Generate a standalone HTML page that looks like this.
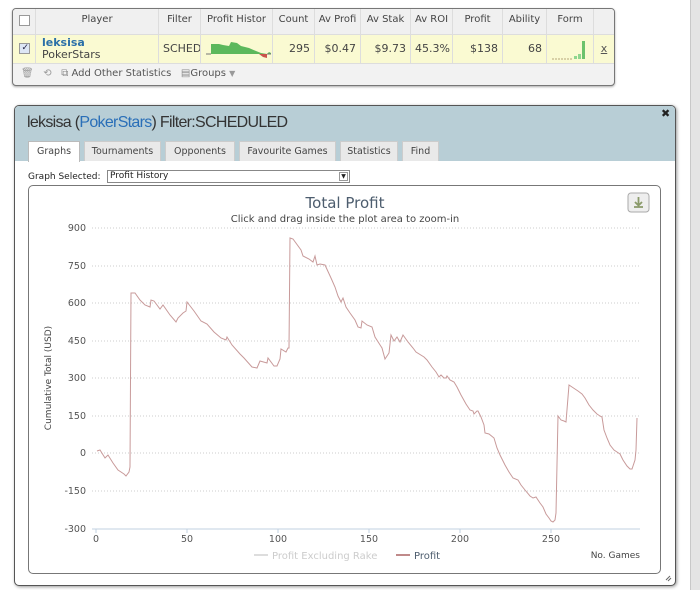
<!DOCTYPE html>
<html><head><meta charset="utf-8"><style>
*{box-sizing:border-box;margin:0;padding:0}
body{width:700px;height:590px;background:#fff;font-family:"DejaVu Sans","Liberation Sans",sans-serif;position:relative;overflow:hidden;color:#333}
.abs{position:absolute}
.scroll{left:690px;top:0;width:10px;height:590px;background:#e4e4e4;border-left:1px solid #c8c8c8}
.tbl{left:12px;top:8px;width:603px;height:78px;border:1px solid #777;border-radius:4px;background:#f2f2f2;box-shadow:0 1px 2px #aaa;overflow:hidden}
.hdr{left:0;top:0;width:601px;height:26px;background:#f0f0f0;border-bottom:1px solid #ddd}
.row{left:0;top:26px;width:601px;height:29px;background:#fafad2;border-bottom:1px solid #ddd}
.c{position:absolute;top:0;height:100%;border-right:1px solid #ddd;font-size:10px;color:#444;white-space:nowrap;overflow:hidden}
.hdr .c{text-align:center;line-height:22px}
.row .c{line-height:28px;text-align:right;padding-right:4px;font-size:11px}
.cb{position:absolute;width:11px;height:11px;border:1px solid #999;background:#fff;left:6px}
.dlg{left:14px;top:105px;width:662px;height:481px;border:1px solid #555;border-radius:5px;background:#fff;box-shadow:1px 1px 3px #999;overflow:hidden}
.dh{left:0;top:0;width:660px;height:55px;background:#b8ced6}
.tab{position:absolute;top:35px;height:20px;background:#e9e9e9;border:1px solid #ccc;border-bottom:none;font-size:9.5px;line-height:19px;text-align:center;color:#444}
.chart{left:13px;top:79px;width:633px;height:389px;border:1px solid #777;border-radius:5px;background:#fff}
</style></head><body>
<div class="abs scroll"></div>

<div class="abs tbl">
 <div class="abs hdr">
  <div class="c" style="left:0;width:23px"><div class="cb" style="top:6px"></div></div>
  <div class="c" style="left:23px;width:123px">Player</div>
  <div class="c" style="left:146px;width:42px">Filter</div>
  <div class="c" style="left:188px;width:72px">Profit Histor</div>
  <div class="c" style="left:260px;width:42px">Count</div>
  <div class="c" style="left:302px;width:46px">Av Profi</div>
  <div class="c" style="left:348px;width:50px">Av Stak</div>
  <div class="c" style="left:398px;width:42px">Av ROI</div>
  <div class="c" style="left:440px;width:50px">Profit</div>
  <div class="c" style="left:490px;width:44px">Ability</div>
  <div class="c" style="left:534px;width:47px">Form</div>
  <div class="c" style="left:581px;width:20px;border:none"></div>
 </div>
 <div class="abs row">
  <div class="c" style="left:0;width:23px"><div class="cb" style="top:8px;background:#dde6f5;font-size:9px;line-height:9px;color:#224">✓</div></div>
  <div class="c" style="left:23px;width:123px;text-align:left;padding-left:6px;line-height:12px;padding-top:2px"><b style="color:#2a6fa8">leksisa</b><br>PokerStars</div>
  <div class="c" style="left:146px;width:42px;text-align:left;padding-left:4px">SCHEDU</div>
  <div class="c" style="left:188px;width:72px">
   <svg width="72" height="28" style="position:absolute;left:0;top:0"><path d="M10,9 L18,9 L22,10 L28,11 L30,7 L36,8 L40,11 L48,13 L55,16 L60,18 L66,19 L68,17 L70,18 L70,19 L10,19Z" fill="#5cb85c"/><path d="M58,19 L66,19 L66,23 L62,22Z" fill="#c9534b"/><path d="M5,19 L10,19 M66,19 L70,19" stroke="#777" stroke-width="1"/></svg>
  </div>
  <div class="c" style="left:260px;width:42px">295</div>
  <div class="c" style="left:302px;width:46px">$0.47</div>
  <div class="c" style="left:348px;width:50px">$9.73</div>
  <div class="c" style="left:398px;width:42px;text-align:left;padding-left:4px">45.3%</div>
  <div class="c" style="left:440px;width:50px">$138</div>
  <div class="c" style="left:490px;width:44px">68</div>
  <div class="c" style="left:534px;width:47px"><svg width="47" height="28" style="position:absolute;left:0;top:0"><path d="M5,24 H26" stroke="#b5a57a" stroke-dasharray="2,1"/><rect x="27" y="21" width="3" height="3" fill="#8fd68f"/><rect x="31" y="19" width="3" height="5" fill="#8fd68f"/><rect x="35" y="6" width="3" height="18" fill="#6cc26c"/></svg></div>
  <div class="c" style="left:581px;width:20px;border:none;text-align:center;padding:0;text-decoration:underline;color:#555">x</div>
 </div>
 <div class="abs" style="left:8px;top:59px;font-size:10px;color:#555;white-space:nowrap">
  <span style="color:#999">🗑</span>&nbsp;&nbsp;&nbsp;<span style="color:#999">⟲</span>&nbsp;&nbsp;&nbsp;<span style="color:#888">⧉</span> Add Other Statistics &nbsp;&nbsp;<span style="color:#888">▤</span>Groups <span style="color:#999;font-size:8px">▼</span>
 </div>
</div>

<div class="abs dlg">
 <div class="abs dh"></div>
 <div class="abs" style="left:12px;top:8px;font-family:'Liberation Sans',sans-serif;font-size:16px;color:#333;letter-spacing:-0.7px">leksisa (<span style="color:#2a6fb8">PokerStars</span>) Filter:SCHEDULED</div>
 <div class="abs" style="left:646px;top:1px;font-size:11px;font-weight:bold;color:#222">✖</div>
 <div class="tab" style="left:13px;width:52px;background:#fff;border-color:#bbb;height:21px">Graphs</div>
 <div class="tab" style="left:69px;width:77px">Tournaments</div>
 <div class="tab" style="left:150px;width:70px">Opponents</div>
 <div class="tab" style="left:224px;width:97px">Favourite Games</div>
 <div class="tab" style="left:325px;width:58px">Statistics</div>
 <div class="tab" style="left:387px;width:37px">Find</div>
 <div class="abs" style="left:13px;top:66px;font-size:9px;color:#222">Graph Selected:</div>
 <div class="abs" style="left:92px;top:64px;width:243px;height:13px;border:1px solid #888;font-size:9px;line-height:11px;padding-left:2px;color:#222">Profit History<span style="position:absolute;right:1px;top:1px;width:9px;height:9px;border:1px solid #999;font-size:6px;line-height:8px;text-align:center">▼</span></div>
 <div class="abs chart"></div>
</div>

<svg class="abs" style="left:0;top:0" width="690" height="590">
 <g stroke="#ccc" stroke-dasharray="1,2" stroke-width="1">
  <path d="M92,228H640M92,266H640M92,303H640M92,341H640M92,378H640M92,416H640M92,453H640M92,491H640"/>
 </g>
 <path d="M92,529H640" stroke="#c0d0e0"/>
 <g stroke="#c0d0e0"><path d="M96,529v4M187,529v4M278,529v4M369,529v4M460,529v4M551,529v4"/></g>
 <g font-family="DejaVu Sans,sans-serif" font-size="9.5" fill="#555" text-anchor="end">
  <text x="86" y="231">900</text><text x="86" y="269">750</text><text x="86" y="306">600</text><text x="86" y="344">450</text><text x="86" y="381">300</text><text x="86" y="419">150</text><text x="86" y="456">0</text><text x="86" y="494">-150</text><text x="86" y="532">-300</text>
 </g>
 <g font-family="DejaVu Sans,sans-serif" font-size="9.5" fill="#555" text-anchor="middle">
  <text x="96" y="542">0</text><text x="187" y="542">50</text><text x="278" y="542">100</text><text x="369" y="542">150</text><text x="460" y="542">200</text><text x="551" y="542">250</text>
 </g>
 <text x="51" y="378" transform="rotate(-90 51 378)" font-family="DejaVu Sans,sans-serif" font-size="9" fill="#444" text-anchor="middle">Cumulative Total (USD)</text>
 <text x="345" y="208" font-family="DejaVu Sans,sans-serif" font-size="15" fill="#4d5d6e" text-anchor="middle">Total Profit</text>
 <text x="345" y="222" font-family="DejaVu Sans,sans-serif" font-size="10" fill="#444" text-anchor="middle">Click and drag inside the plot area to zoom-in</text>
 <rect x="628" y="193" width="21" height="19" rx="3" fill="#eee" stroke="#aaa"/>
 <path d="M638.5,197v8M635,202l3.5,3.5l3.5,-3.5M634,207h9" stroke="#8a9a6a" stroke-width="1.8" fill="none"/>
 <path d="M254,555h14" stroke="#ddd" stroke-width="2"/>
 <text x="272" y="559" font-family="DejaVu Sans,sans-serif" font-size="10" fill="#ccc">Profit Excluding Rake</text>
 <path d="M396,555h14" stroke="#c08a8a" stroke-width="2"/>
 <text x="414" y="559" font-family="DejaVu Sans,sans-serif" font-size="10" fill="#4d5d6e">Profit</text>
 <text x="640" y="558" font-family="DejaVu Sans,sans-serif" font-size="9" fill="#444" text-anchor="end">No. Games</text>
 <path d="M666,580l4,-4M668,581l3,-3" stroke="#666"/>
 <path fill="none" stroke="#c89a9a" stroke-width="1" d="M97,451 L100,450 L105,458 L108,455 L113,463 L118,470 L124,474 L126,476 L129,472 L130,467 L131,293 L135,293 L140,300 L145,305 L150,307 L151,300 L154,301 L160,309 L163,305 L170,315 L176,322 L178,318 L183,313 L186,311 L187,302 L194,311 L201,321 L207,324 L214,332 L221,338 L226,340 L227,337 L232,345 L240,354 L244,358 L252,367 L257,368 L260,361 L267,363 L268,358 L274,366 L277,366 L280,359 L281,349 L286,352 L288,348 L289,348 L290,238 L293,239 L301,250 L303,256 L309,259 L313,262 L315,256 L317,265 L320,264 L325,265 L331,278 L335,287 L338,296 L341,302 L343,298 L346,307 L350,313 L355,320 L358,327 L361,328 L362,321 L367,325 L372,327 L375,337 L382,348 L385,359 L389,353 L391,335 L394,341 L397,337 L400,342 L403,335 L408,342 L413,348 L416,352 L424,357 L427,360 L432,367 L436,372 L439,377 L441,375 L444,378 L446,378 L447,376 L450,380 L454,382 L457,387 L461,395 L466,404 L470,410 L473,411 L474,414 L477,411 L478,411 L481,417 L484,425 L485,433 L489,434 L494,438 L497,448 L500,455 L505,465 L509,472 L513,478 L518,480 L521,485 L525,490 L530,496 L533,498 L536,497 L540,503 L543,507 L546,514 L549,518 L551,521 L553,522 L555,520 L556,513 L558,416 L561,420 L564,421 L566,422 L569,385 L575,389 L578,391 L582,394 L585,398 L589,405 L593,410 L597,414 L600,416 L602,417 L604,430 L607,438 L610,445 L614,450 L617,452 L620,454 L623,460 L627,466 L630,469 L632,469 L635,460 L636,450 L637,418"/>
</svg>
</body></html>
